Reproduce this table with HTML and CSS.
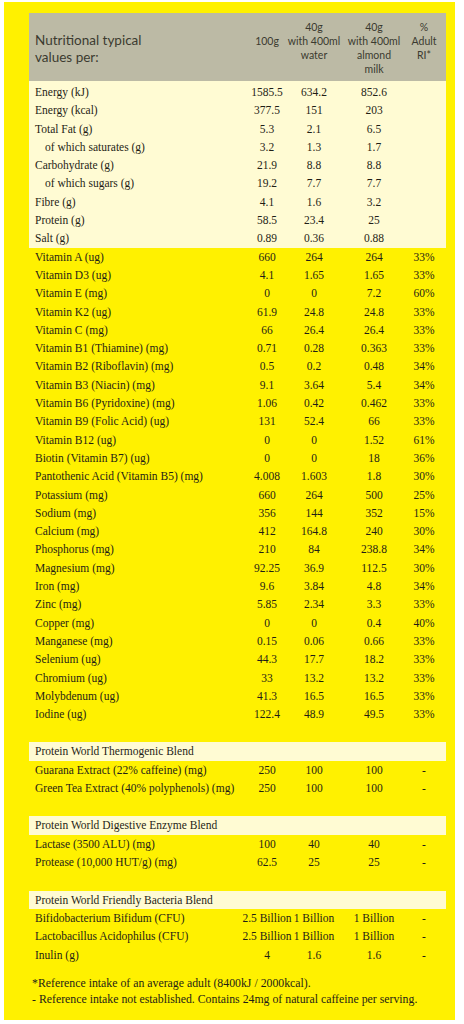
FILE: index.html
```html
<!DOCTYPE html>
<html lang="en">
<head>
<meta charset="UTF-8">
<meta name="viewport" content="width=device-width, initial-scale=1.0">
<title>Nutritional information</title>
<link rel="stylesheet" href="styles.css">
</head>
<body>

<div class="panel">

    <div class="grid head">
        <div class="title">Nutritional typical<br>values per:</div>
        <div class="col low"><span>100g</span></div>
        <div class="col"><span>40g</span><span>with 400ml</span><span>water</span></div>
        <div class="col"><span>40g</span><span>with 400ml</span><span>almond</span><span>milk</span></div>
        <div class="col"><span>%</span><span>Adult</span><span>RI*</span></div>
    </div>

    <div class="cream">
        <div class="grid row"><span class="name">Energy (kJ)</span><span>1585.5</span><span>634.2</span><span>852.6</span><span></span></div>
        <div class="grid row"><span class="name">Energy (kcal)</span><span>377.5</span><span>151</span><span>203</span><span></span></div>
        <div class="grid row"><span class="name">Total Fat (g)</span><span>5.3</span><span>2.1</span><span>6.5</span><span></span></div>
        <div class="grid row sub"><span class="name">of which saturates (g)</span><span>3.2</span><span>1.3</span><span>1.7</span><span></span></div>
        <div class="grid row"><span class="name">Carbohydrate (g)</span><span>21.9</span><span>8.8</span><span>8.8</span><span></span></div>
        <div class="grid row sub"><span class="name">of which sugars (g)</span><span>19.2</span><span>7.7</span><span>7.7</span><span></span></div>
        <div class="grid row"><span class="name">Fibre (g)</span><span>4.1</span><span>1.6</span><span>3.2</span><span></span></div>
        <div class="grid row"><span class="name">Protein (g)</span><span>58.5</span><span>23.4</span><span>25</span><span></span></div>
        <div class="grid row"><span class="name">Salt (g)</span><span>0.89</span><span>0.36</span><span>0.88</span><span></span></div>
    </div>

    <div class="grid row"><span class="name">Vitamin A (ug)</span><span>660</span><span>264</span><span>264</span><span>33%</span></div>
    <div class="grid row"><span class="name">Vitamin D3 (ug)</span><span>4.1</span><span>1.65</span><span>1.65</span><span>33%</span></div>
    <div class="grid row"><span class="name">Vitamin E (mg)</span><span>0</span><span>0</span><span>7.2</span><span>60%</span></div>
    <div class="grid row"><span class="name">Vitamin K2 (ug)</span><span>61.9</span><span>24.8</span><span>24.8</span><span>33%</span></div>
    <div class="grid row"><span class="name">Vitamin C (mg)</span><span>66</span><span>26.4</span><span>26.4</span><span>33%</span></div>
    <div class="grid row"><span class="name">Vitamin B1 (Thiamine) (mg)</span><span>0.71</span><span>0.28</span><span>0.363</span><span>33%</span></div>
    <div class="grid row"><span class="name">Vitamin B2 (Riboflavin) (mg)</span><span>0.5</span><span>0.2</span><span>0.48</span><span>34%</span></div>
    <div class="grid row"><span class="name">Vitamin B3 (Niacin) (mg)</span><span>9.1</span><span>3.64</span><span>5.4</span><span>34%</span></div>
    <div class="grid row"><span class="name">Vitamin B6 (Pyridoxine) (mg)</span><span>1.06</span><span>0.42</span><span>0.462</span><span>33%</span></div>
    <div class="grid row"><span class="name">Vitamin B9 (Folic Acid) (ug)</span><span>131</span><span>52.4</span><span>66</span><span>33%</span></div>
    <div class="grid row"><span class="name">Vitamin B12 (ug)</span><span>0</span><span>0</span><span>1.52</span><span>61%</span></div>
    <div class="grid row"><span class="name">Biotin (Vitamin B7) (ug)</span><span>0</span><span>0</span><span>18</span><span>36%</span></div>
    <div class="grid row"><span class="name">Pantothenic Acid (Vitamin B5) (mg)</span><span>4.008</span><span>1.603</span><span>1.8</span><span>30%</span></div>
    <div class="grid row"><span class="name">Potassium (mg)</span><span>660</span><span>264</span><span>500</span><span>25%</span></div>
    <div class="grid row"><span class="name">Sodium (mg)</span><span>356</span><span>144</span><span>352</span><span>15%</span></div>
    <div class="grid row"><span class="name">Calcium (mg)</span><span>412</span><span>164.8</span><span>240</span><span>30%</span></div>
    <div class="grid row"><span class="name">Phosphorus (mg)</span><span>210</span><span>84</span><span>238.8</span><span>34%</span></div>
    <div class="grid row"><span class="name">Magnesium (mg)</span><span>92.25</span><span>36.9</span><span>112.5</span><span>30%</span></div>
    <div class="grid row"><span class="name">Iron (mg)</span><span>9.6</span><span>3.84</span><span>4.8</span><span>34%</span></div>
    <div class="grid row"><span class="name">Zinc (mg)</span><span>5.85</span><span>2.34</span><span>3.3</span><span>33%</span></div>
    <div class="grid row"><span class="name">Copper (mg)</span><span>0</span><span>0</span><span>0.4</span><span>40%</span></div>
    <div class="grid row"><span class="name">Manganese (mg)</span><span>0.15</span><span>0.06</span><span>0.66</span><span>33%</span></div>
    <div class="grid row"><span class="name">Selenium (ug)</span><span>44.3</span><span>17.7</span><span>18.2</span><span>33%</span></div>
    <div class="grid row"><span class="name">Chromium (ug)</span><span>33</span><span>13.2</span><span>13.2</span><span>33%</span></div>
    <div class="grid row"><span class="name">Molybdenum (ug)</span><span>41.3</span><span>16.5</span><span>16.5</span><span>33%</span></div>
    <div class="grid row"><span class="name">Iodine (ug)</span><span>122.4</span><span>48.9</span><span>49.5</span><span>33%</span></div>

    <div class="blend">
        <div class="band">Protein World Thermogenic Blend</div>
        <div class="grid row"><span class="name">Guarana Extract (22% caffeine) (mg)</span><span>250</span><span>100</span><span>100</span><span>-</span></div>
        <div class="grid row"><span class="name">Green Tea Extract (40% polyphenols) (mg)</span><span>250</span><span>100</span><span>100</span><span>-</span></div>
    </div>

    <div class="blend">
        <div class="band">Protein World Digestive Enzyme Blend</div>
        <div class="grid row"><span class="name">Lactase (3500 ALU) (mg)</span><span>100</span><span>40</span><span>40</span><span>-</span></div>
        <div class="grid row"><span class="name">Protease (10,000 HUT/g) (mg)</span><span>62.5</span><span>25</span><span>25</span><span>-</span></div>
    </div>

    <div class="blend">
        <div class="band">Protein World Friendly Bacteria Blend</div>
        <div class="grid row"><span class="name">Bifidobacterium Bifidum (CFU)</span><span>2.5 Billion</span><span>1 Billion</span><span>1 Billion</span><span>-</span></div>
        <div class="grid row"><span class="name">Lactobacillus Acidophilus (CFU)</span><span>2.5 Billion</span><span>1 Billion</span><span>1 Billion</span><span>-</span></div>
        <div class="grid row"><span class="name">Inulin (g)</span><span>4</span><span>1.6</span><span>1.6</span><span>-</span></div>
    </div>

    <div class="notes">
        <p>*Reference intake of an average adult (8400kJ / 2000kcal).</p>
        <p>- Reference intake not established. Contains 24mg of natural caffeine per serving.</p>
    </div>

</div>

</body>
</html>
```

FILE: styles.css
```css
body {
    margin: 0;
    background-color: #ffffff;
    font-family: "Liberation Serif", serif;
    color: #1f1e16;
}

.panel {
    width: 451px;
    height: 1018px;
    margin: 2px 0 0 4px;
    padding: 11px 9px 0 25px;
    box-sizing: border-box;
    background-color: #fff100;
}

.grid {
    display: grid;
    grid-template-columns: 1fr 50px 44px 76px 24px;
    padding: 0 10px 0 6px;
}

/* header */
.head {
    height: 68px;
    padding-top: 7px;
    box-sizing: border-box;
    background-color: #bcbaa5;
    font-family: Lato, "Liberation Sans", sans-serif;
    color: #3b3a30;
    align-items: start;
}

.head .title {
    font-size: 13.5px;
    line-height: 17px;
    padding-top: 12px;
}

.head .col {
    display: flex;
    flex-direction: column;
    align-items: center;
    font-size: 10.5px;
    line-height: 14px;
    white-space: nowrap;
}

.head .col.low {
    padding-top: 14px;
}

/* rows */
.cream {
    background-color: #fffbd3;
    padding-top: 2px;
}

.row {
    font-size: 11.5px;
    line-height: 18.3px;
}

.row span {
    display: flex;
    justify-content: center;
    white-space: nowrap;
}

.row span.name {
    display: block;
}

.row.sub .name {
    padding-left: 10px;
}

/* blends */
.blend {
    margin-top: 19px;
}

.band {
    background-color: #fffbd3;
    font-size: 11.5px;
    line-height: 18.5px;
    padding-left: 6px;
}

/* footnotes */
.notes {
    margin-top: 11px;
    padding-left: 3px;
    font-size: 11.8px;
    line-height: 16px;
}

.notes p {
    margin: 0;
}
```
